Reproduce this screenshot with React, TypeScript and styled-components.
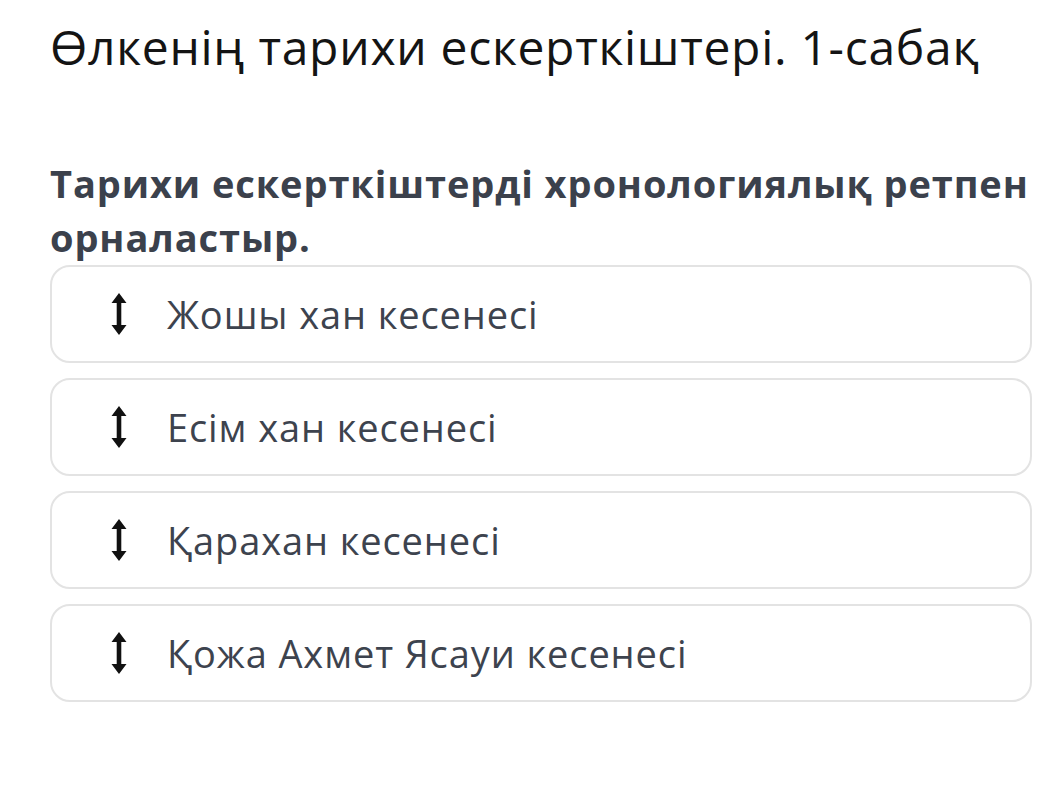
import styled, { createGlobalStyle } from "styled-components";

const items = [
  "Жошы хан кесенесі",
  "Есім хан кесенесі",
  "Қарахан кесенесі",
  "Қожа Ахмет Ясауи кесенесі",
];

const App: React.FC = () => {
  return (
    <>
      <GlobalStyle />
      <Page>
        <Title>Өлкенің тарихи ескерткіштері. 1-сабақ</Title>
        <Question>Тарихи ескерткіштерді хронологиялық ретпен орналастыр.</Question>
        <List>
          {items.map((item) => (
            <Item key={item}>
              <DragIcon />
              <ItemText>{item}</ItemText>
            </Item>
          ))}
        </List>
      </Page>
    </>
  );
};

export default App;

// up-down drag handle
const DragIcon = () => (
  <IconBox>
    <svg width="16" height="42" viewBox="0 0 16 42">
      <path d="M8 0 L15.5 10 L10.3 10 L10.3 32 L15.5 32 L8 42 L0.5 32 L5.7 32 L5.7 10 L0.5 10 Z" fill="#111" />
    </svg>
  </IconBox>
);

const GlobalStyle = createGlobalStyle`
  body {
    margin: 0;
    background: #ffffff;
    font-family: "Open Sans", "Noto Sans", sans-serif;
  }
`;

const Page = styled.div`
  width: 1063px;
  padding: 14px 20px 0 50px;
  box-sizing: border-box;
`;

const Title = styled.h1`
  margin: 0;
  font-size: 48px;
  font-weight: 400;
  letter-spacing: 0.7px;
  line-height: 66px;
  color: #141414;
`;

const Question = styled.h2`
  margin: 76px 0 0;
  font-size: 38px;
  font-weight: 700;
  letter-spacing: 0.9px;
  line-height: 54px;
  color: #3b414c;
`;

const List = styled.div`
  display: flex;
  flex-direction: column;
  gap: 15px;
  margin-top: 1px;
  width: 982px;
`;

const Item = styled.div`
  display: flex;
  align-items: center;
  height: 98px;
  box-sizing: border-box;
  padding-left: 59px;
  border: 2px solid #e3e3e3;
  border-radius: 20px;
  background: #fff;
`;

const IconBox = styled.div`
  display: flex;
  width: 16px;
  margin-right: 40px;
`;

const ItemText = styled.span`
  font-size: 38px;
  letter-spacing: 0.9px;
  color: #3d434e;
`;
